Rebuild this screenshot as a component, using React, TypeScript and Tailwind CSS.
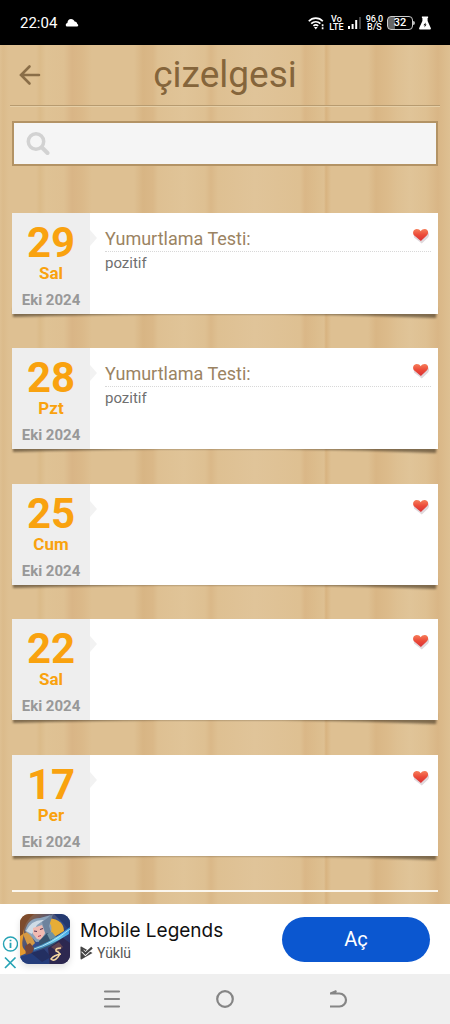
type Entry = {
  day: string;
  weekday: string;
  month: string;
  title?: string;
  value?: string;
};

const entries: Entry[] = [
  { day: "29", weekday: "Sal", month: "Eki 2024", title: "Yumurtlama Testi:", value: "pozitif" },
  { day: "28", weekday: "Pzt", month: "Eki 2024", title: "Yumurtlama Testi:", value: "pozitif" },
  { day: "25", weekday: "Cum", month: "Eki 2024" },
  { day: "22", weekday: "Sal", month: "Eki 2024" },
  { day: "17", weekday: "Per", month: "Eki 2024" },
];

function StatusBar() {
  return (
    <div className="flex h-[45px] shrink-0 items-center justify-between bg-black pr-[19px] pl-5 text-white">
      <div className="flex items-center gap-2">
        <span className="text-[15px] leading-5">22:04</span>
        <svg width="14" height="10" viewBox="0 0 14 10" fill="#fff" aria-hidden="true">
          <path d="M2.2 8.6C.3 8.600.2 5.400 2.400 5 2.600 2.300 4 1 6 1c1.800 0 3 .9 3.600 2.600 1.600.1 2.500 1 2.700 2.300 1.300.4 1.300 2.700-.3 2.700z" />
        </svg>
      </div>
      <div className="flex items-center gap-1 text-[9px] leading-[8px] font-medium">
        <svg width="17" height="14" viewBox="0 0 17 14" fill="none" stroke="#fff" strokeWidth="1.700" aria-hidden="true">
          <path d="M.8 5.200c3.800-4.200 10.200-4.200 14 0M3.200 7.700c2.600-2.600 6.600-2.600 9.200 0M5.400 9.900c1.400-1.200 3.400-1.200 4.800 0" />
          <path d="M6 11l1.800 2.400L9.600 11z" fill="#fff" stroke="none" />
          <path d="M14.600 8.200v2M14.600 11.200v2" />
        </svg>
        <span className="text-center">
          Vo
          <br />
          LTE
        </span>
        <svg width="14" height="14" viewBox="0 0 14 14" fill="#fff" aria-hidden="true">
          <path d="M0 10h2v3H0zM3.600 8h2v5h-2zM7.200 4h2v9h-2z" />
          <path d="M11 1h2v12h-2z" fill="#444" />
        </svg>
        <span className="text-center">
          96,0
          <br />
          B/S
        </span>
        <span className="flex items-center">
          <span className="flex h-[14px] w-[26px] items-center justify-center rounded-[4px] border border-[#ccc] bg-linear-to-r from-[#666] from-30% to-black to-30% text-[11px] leading-3 font-medium">
            32
          </span>
          <span className="h-1 w-[2px] rounded-r bg-[#bbb]" />
        </span>
        <svg width="12" height="14" viewBox="0 0 12 14" fill="#fff" aria-hidden="true">
          <path d="M2.900.5h6.200v1.600H8.600V5L11.800 12c.3 1-.2 1.500-1 1.500H1.200c-.8 0-1.300-.5-1-1.500L3.400 5V2.100h-.5z" />
          <path d="M6.800 6.500L4.400 9.300h1.500L5.300 11.500l2.300-2.900H6.300z" fill="#000" />
        </svg>
      </div>
    </div>
  );
}

function Heart() {
  return (
    <svg className="absolute top-[14px] right-2" width="18" height="18" viewBox="0 0 18 18" role="img" aria-label="Kalp">
      <defs>
        <linearGradient id="heart-fill" x1="0" y1="0" x2="0" y2="1">
          <stop offset="0" stopColor="#f67f5c" />
          <stop offset="0.500" stopColor="#ec4a38" />
          <stop offset="1" stopColor="#d83238" />
        </linearGradient>
      </defs>
      <path d="M9.800 16.600L2 10.500L1.500 6L15 4.500C17.600 6 17.400 9 15.900 10.800z" fill="#e0d8dc" />
      <path d="M8.900 14L2 8.300C0 5.600 1.600 2.300 4.600 2.100c1.800-.1 3.200.7 4.100 2.200C9.700 2.700 11.300 1.800 13 2c3.100.4 4.100 3.700 2.200 6z" fill="url(#heart-fill)" />
    </svg>
  );
}

function EntryCard({ entry }: { entry: Entry }) {
  return (
    <li className="relative">
      <svg
        className="absolute -bottom-[6px] left-0 h-[12px] w-full blur-[1px]"
        viewBox="0 0 426 12"
        preserveAspectRatio="none"
        aria-hidden="true"
      >
        <path d="M1 0H425L424 10Q350 7 270 6H150Q70 7 1 9Z" fill="#3f3220" opacity="0.600" />
      </svg>
      <article className="relative flex h-[101px] bg-white">
        <div className="flex w-[78px] shrink-0 flex-col items-center bg-[#eeeeee] pt-[10px] font-bold">
          <span className="text-[42px] leading-10 text-[#f9a20f]">{entry.day}</span>
          <span className="text-[17px] leading-5 text-[#f9a20f]">{entry.weekday}</span>
          <span className="mt-[7px] text-[15px] leading-5 text-[#989898]">{entry.month}</span>
        </div>
        <svg className="mt-[17px] h-4 w-[7px] shrink-0" viewBox="0 0 7 16" aria-hidden="true">
          <path d="M0 0L7 8L0 16Z" fill="#f2f2f2" />
        </svg>
        <div className="min-w-0 flex-1 pt-[13px] pr-[7px] pl-2">
          {entry.title && (
            <>
              <h2 className="h-[26px] border-b border-dotted border-[#d8d8d8] text-[18px] leading-[25px] text-[#9b8362]">
                {entry.title}
              </h2>
              <p className="text-[15px] leading-[22px] text-[#707070]">{entry.value}</p>
            </>
          )}
        </div>
        <Heart />
      </article>
    </li>
  );
}

function GameIcon() {
  return (
    <svg className="shrink-0 drop-shadow-md" width="50" height="50" viewBox="0 0 50 50" role="img" aria-label="Mobile Legends">
      <defs>
        <clipPath id="game-clip">
          <rect width="50" height="50" rx="9" />
        </clipPath>
        <linearGradient id="game-sky" x1="0" y1="0" x2="1" y2="1">
          <stop offset="0" stopColor="#a8672a" />
          <stop offset="0.450" stopColor="#35508f" />
          <stop offset="1" stopColor="#252450" />
        </linearGradient>
        <linearGradient id="game-beam" x1="0" y1="1" x2="1" y2="0">
          <stop offset="0" stopColor="#2f6da6" />
          <stop offset="0.600" stopColor="#6fd0ee" />
          <stop offset="1" stopColor="#2b8be0" />
        </linearGradient>
      </defs>
      <g clipPath="url(#game-clip)">
        <rect width="50" height="50" fill="url(#game-sky)" />
        <path d="M0 8Q6 12 3 24T9 38L0 42Z" fill="#e59a2f" />
        <path d="M0 0H14Q4 8 3 20L0 22Z" fill="#7d4b2c" />
        <path d="M3 20L9 17L15 29L9 35Z" fill="#d59a45" />
        <path d="M29 4Q44 6 44 17L31 25L25 17Z" fill="#e7ad36" />
        <path d="M34 0H50V17L43 9Z" fill="#24396f" />
        <path d="M5 17Q8 4 20 4L31 1L27 6Q33 10 31 20L27 27L16 28L9 20Z" fill="#8ba2ba" />
        <path d="M6 17Q12 5 24 6L17 11L12 20Z" fill="#cfdce6" />
        <path d="M22 8L33 0L29 12L31 18L26 22Z" fill="#6d839d" />
        <path d="M13 14L22 11L25 19L21 26L17 25L13 20Z" fill="#f0bbb2" />
        <path d="M14 17L17 17.500M20 15.500L23 14.500" stroke="#5b3550" strokeWidth="1.100" />
        <path d="M18 22.500L21 21.500" stroke="#b9455c" />
        <path d="M19 27L27 19L37 23L36 30L20 36Z" fill="#36546f" />
        <path d="M27 20L32 18L36 23L30 26Z" fill="#6f91a3" />
        <path d="M12 34Q29 30 50 13L49 20Q30 32 14 37Z" fill="url(#game-beam)" />
        <path d="M14 35Q31 30 50 15" fill="none" stroke="#c9f4fc" strokeWidth="0.800" />
        <path d="M5 32L10 29L14 34L11 42L6 42Z" fill="#754638" />
        <path d="M28 34L43 24L50 29V50H30Z" fill="#2d2850" />
        <path d="M31 33L39 28L43 33L38 38Z" fill="#604350" />
        <path d="M0 43L15 38L29 42V50H0Z" fill="#253d7b" />
        <path d="M11 39L24 35L31 43L22 48Z" fill="#232f61" />
        <path d="M41 34Q35 34 36 37Q42 39 38 43Q34 48 31 45Q34 41 41 40" fill="none" stroke="#f4d7a2" strokeWidth="1.500" />
      </g>
    </svg>
  );
}

function AdBanner() {
  return (
    <aside className="flex h-[70px] shrink-0 items-center bg-white pr-5 pl-[2px]">
      <div className="flex flex-col gap-[3px] pt-[29px]">
        <button type="button" aria-label="Reklam bilgisi" className="block">
          <svg width="16" height="16" viewBox="0 0 16 16" fill="none" stroke="#27a3b5" strokeWidth="1.400">
            <circle cx="8.500" cy="8" r="7" />
            <path d="M8.500 6.800V12M8.500 3.700V5.300" strokeWidth="1.800" />
          </svg>
        </button>
        <button type="button" aria-label="Reklamı kapat" className="block">
          <svg width="16" height="16" viewBox="0 0 16 16" fill="none" stroke="#27a3b5" strokeWidth="1.700">
            <path d="M3 2.500L13.500 13M13.500 2.500L3 13" />
          </svg>
        </button>
      </div>
      <div className="ml-[2px] flex">
        <GameIcon />
      </div>
      <div className="ml-[10px] min-w-0 flex-1 pt-1 whitespace-nowrap">
        <p className="font-[Inter,sans-serif] text-[19px] leading-6 text-[#111]">Mobile Legends</p>
        <p className="flex items-center gap-1 text-[14px] leading-5 text-[#555]">
          <svg width="13" height="14" viewBox="0 0 13 14" aria-hidden="true">
            <path d="M.5 1.400Q.5.200 1.700.8L12.500 7L1.700 13.200Q.5 13.800.5 12.600Z" fill="#444" />
            <path d="M2.500 4.700L5.400 7.700L12 1.700" fill="none" stroke="#fff" strokeWidth="3.600" />
            <path d="M1.500 3.500L5.400 7.500L12 1.700" fill="none" stroke="#444" strokeWidth="2.200" />
          </svg>
          Yüklü
        </p>
      </div>
      <button type="button" className="h-[45px] w-[148px] shrink-0 rounded-full bg-[#0b57d0] text-[20px] text-white">
        Aç
      </button>
    </aside>
  );
}

function NavBar() {
  return (
    <nav className="flex h-[50px] shrink-0 items-center justify-center gap-[93px] bg-[#efefef]">
      <button type="button" aria-label="Son uygulamalar">
        <svg width="20" height="20" viewBox="0 0 20 20" fill="none" stroke="#858585" strokeWidth="2.200" strokeLinecap="round">
          <path d="M3 2.500H17M3 10H17M3 17.500H17" />
        </svg>
      </button>
      <button type="button" aria-label="Ana ekran">
        <svg width="20" height="20" viewBox="0 0 20 20" fill="none" stroke="#858585" strokeWidth="2.200">
          <circle cx="10" cy="10" r="7.800" />
        </svg>
      </button>
      <button type="button" aria-label="Geri">
        <svg width="20" height="20" viewBox="0 0 20 20" fill="none" stroke="#858585" strokeWidth="2.200">
          <path d="M2 4.500H11.500A6.500 6.500 0 0 1 11.500 17.500H2M2.500 4.500L8.500 2" />
        </svg>
      </button>
    </nav>
  );
}

export default function App() {
  return (
    <div className="flex min-h-screen flex-col font-[Roboto,sans-serif]">
      <StatusBar />
      <main className="flex flex-1 flex-col bg-[#dec092] bg-[linear-gradient(90deg,transparent_0px,#dbbb8b_3px,transparent_9px,transparent_36px,#dbbb8a_40px,#dfc294_46px,transparent_64px,#d9b586_72px,#dbb989_82px,transparent_92px,transparent_134px,#d8b584_143px,#dab888_153px,transparent_158px,#e0c498_184px,transparent_205px,#dab888_211px,transparent_218px,#e0c499_255px,transparent_300px,#dab787_305px,#dcbc8c_315px,transparent_324px,#d8b380_326px,transparent_331px,transparent_368px,#d9b685_376px,#dcbb8b_388px,transparent_397px,#e0c498_410px,transparent_426px,#d9b686_438px,transparent_450px)] bg-[length:450px_100%]">
        <header className="mx-[10px] flex h-[61px] shrink-0 items-center border-b border-[#b79b70] shadow-[0_1px_0_#e6cfa7]">
          <button type="button" aria-label="Geri" className="ml-2">
            <svg width="24" height="24" viewBox="0 0 24 24" fill="none" stroke="#8a6e48" strokeWidth="2.600" strokeLinecap="round">
              <path d="M21 12H3.500M11.500 3.500L3 12L11.500 20.500" />
            </svg>
          </button>
          <h1 className="flex-1 pr-8 text-center text-[37px] leading-[44px] text-[#85653b]">çizelgesi</h1>
        </header>
        <label className="mx-3 mt-[15px] flex h-[45px] shrink-0 items-center border-2 border-[#b39365] bg-[#f5f5f5] pl-3">
          <svg width="24" height="24" viewBox="0 0 24 24" fill="none" stroke="#d2d2d2" aria-hidden="true">
            <circle cx="10" cy="9.500" r="7.700" strokeWidth="3.500" />
            <path d="M16 15.500L21.500 21" strokeWidth="4" strokeLinecap="round" />
          </svg>
          <input type="search" aria-label="Ara" className="min-w-0 flex-1 bg-transparent px-2 text-base text-[#707070] outline-none" />
        </label>
        <ul className="mx-3 mt-[47px] mb-3 flex flex-1 flex-col justify-between gap-[34px]">
          {entries.map((entry) => (
            <EntryCard key={entry.day} entry={entry} />
          ))}
          <li className="h-[2px] bg-[#fbf7ef]" aria-hidden="true" />
        </ul>
      </main>
      <AdBanner />
      <NavBar />
    </div>
  );
}
